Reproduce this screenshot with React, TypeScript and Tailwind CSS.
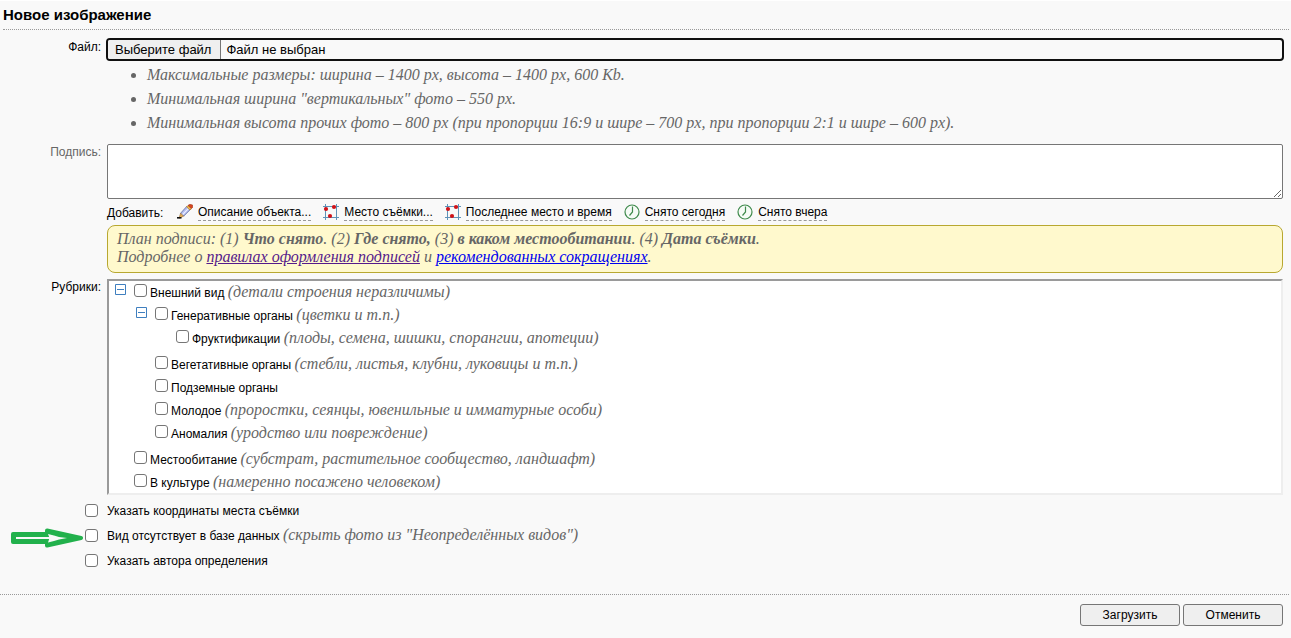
import React from "react";

const sans = "font-['Liberation_Sans',sans-serif]";

function Hint({ children }: { children: React.ReactNode }) {
  return (
    <span className="font-['Liberation_Serif',serif] text-base italic leading-none text-[#666]">{children}</span>
  );
}

function Tick({ id }: { id: string }) {
  return (
    <input
      id={id}
      type="checkbox"
      className="size-[13px] shrink-0 appearance-none rounded-[3px] border border-[#767676] bg-white checked:bg-[#0075ff]"
    />
  );
}

function PencilIcon() {
  return (
    <svg width="16" height="16" viewBox="0 0 16 16" aria-hidden="true">
      <path d="M3.6 9.2 10 2.2 13.4 5.4 6.6 12.2Z" fill="#b4bdf0" stroke="#5c6a9c" strokeWidth="0.8" />
      <path d="M5.6 10.6 11.8 4.2" stroke="#eef0ff" strokeWidth="1.2" />
      <path d="M9.6 2.8 11 1.4 14.4 4.6 13 6Z" fill="#f2c04a" stroke="#a8611c" strokeWidth="0.6" />
      <path d="M11 1.4 12.8.3 15.6 1 15.6 3.2 14.4 4.6Z" fill="#d8441f" stroke="#a03a1a" strokeWidth="0.6" />
      <path d="M3.6 9.2 6.6 12.2 2 14.2Z" fill="#e8b25a" stroke="#8a5a20" strokeWidth="0.5" />
      <path d="M0 13.8H4.5" stroke="#111" strokeWidth="1.6" />
    </svg>
  );
}

function MapIcon() {
  return (
    <svg width="16" height="16" viewBox="0 0 16 16" aria-hidden="true">
      <path d="M2.5 0V16M13.5 0V16M0 2.5H16M0 13.5H16" stroke="#5f93b8" strokeWidth="1" fill="none" />
      <circle cx="3" cy="5" r="2.1" fill="#d01218" />
      <circle cx="11" cy="3" r="2.1" fill="#d01218" />
      <circle cx="7" cy="12" r="2.1" fill="#d01218" />
    </svg>
  );
}

function ClockIcon() {
  return (
    <svg width="16" height="16" viewBox="0 0 16 16" aria-hidden="true">
      <circle cx="8" cy="8" r="7" fill="#f6fbf6" stroke="#3f8a4c" strokeWidth="1.2" />
      <path d="M8.5 2.5V8L5.5 11.5" stroke="#3f8a4c" strokeWidth="1.2" fill="none" />
    </svg>
  );
}

const actions = [
  { text: "Описание объекта...", icon: <PencilIcon /> },
  { text: "Место съёмки...", icon: <MapIcon /> },
  { text: "Последнее место и время", icon: <MapIcon /> },
  { text: "Снято сегодня", icon: <ClockIcon /> },
  { text: "Снято вчера", icon: <ClockIcon /> },
];

type Node = { id: string; text: string; hint?: string; children?: Node[] };

const tree: Node[] = [
  {
    id: "view",
    text: "Внешний вид",
    hint: "(детали строения неразличимы)",
    children: [
      {
        id: "gen",
        text: "Генеративные органы",
        hint: "(цветки и т.п.)",
        children: [
          { id: "fruit", text: "Фруктификации", hint: "(плоды, семена, шишки, спорангии, апотеции)" },
        ],
      },
      { id: "veg", text: "Вегетативные органы", hint: "(стебли, листья, клубни, луковицы и т.п.)" },
      { id: "under", text: "Подземные органы" },
      { id: "young", text: "Молодое", hint: "(проростки, сеянцы, ювенильные и имматурные особи)" },
      { id: "anomaly", text: "Аномалия", hint: "(уродство или повреждение)" },
    ],
  },
  { id: "habitat", text: "Местообитание", hint: "(субстрат, растительное сообщество, ландшафт)" },
  { id: "culture", text: "В культуре", hint: "(намеренно посажено человеком)" },
];

function Branch({ nodes }: { nodes: Node[] }) {
  return (
    <ul className="flex flex-col gap-1">
      {nodes.map((n) => (
        <li key={n.id}>
          <div className="flex h-[19px] items-start">
            <span className="w-[19px] shrink-0">
              {n.children && (
                <button type="button" aria-label="Свернуть" className="block">
                  <svg width="11" height="11" viewBox="0 0 11 11">
                    <path d="M.5.5H10.5V10.5H.5ZM2 5.5H9" fill="#fff" stroke="#3f7fbf" />
                  </svg>
                </button>
              )}
            </span>
            <Tick id={n.id} />
            <label htmlFor={n.id} className="ml-[3px] whitespace-nowrap leading-[18px]">
              {n.text} {n.hint && <Hint>{n.hint}</Hint>}
            </label>
          </div>
          {n.children && (
            <div className="pb-[3px] pl-[21px] pt-1">
              <Branch nodes={n.children} />
            </div>
          )}
        </li>
      ))}
    </ul>
  );
}

const options = [
  { id: "coords", text: "Указать координаты места съёмки" },
  { id: "missing", text: "Вид отсутствует в базе данных", hint: '(скрыть фото из "Неопределённых видов")', arrow: true },
  { id: "author", text: "Указать автора определения" },
];

const button =
  "h-[22px] w-[100px] rounded-[3px] border border-[#767676] bg-[#efefef] text-center text-xs leading-5";

export default function App() {
  return (
    <form className={`min-h-screen border-t border-white bg-[#f9f9f9] text-xs text-black ${sans}`}>
      <h1 className="ml-[3px] mr-0.5 h-[29px] border-b border-dotted border-[#999] text-[15px] font-bold leading-7">
        Новое изображение
      </h1>

      <div className="grid grid-cols-[101px_minmax(0,1fr)] gap-x-[6px] pr-2 pt-2">
        <label htmlFor="file" className="text-right leading-[18px]">
          Файл:
        </label>
        <div>
          <div className="relative -mx-px flex h-[23px] items-stretch overflow-hidden rounded border-2 border-[#101010] text-[13px] leading-[19px]">
            <span className="border-r border-[#767676] bg-[#efefef] pl-[7px] pr-[9px]">Выберите файл</span>
            <span className="pl-[5px]">Файл не выбран</span>
            <input id="file" type="file" className="absolute inset-0 opacity-0" />
          </div>
          <ul className="mt-0.5 list-disc pl-10 font-['Liberation_Serif',serif] text-base italic leading-6 text-[#666]">
            <li>Максимальные размеры: ширина – 1400 px, высота – 1400 px, 600 Kb.</li>
            <li>Минимальная ширина "вертикальных" фото – 550 px.</li>
            <li>
              Минимальная высота прочих фото – 800 px (при пропорции 16:9 и шире – 700 px, при пропорции 2:1 и шире –
              600 px).
            </li>
          </ul>
        </div>

        <label htmlFor="caption" className="mt-2 text-right leading-[18px] text-[#666]">
          Подпись:
        </label>
        <div className="mt-[9px]">
          <textarea id="caption" className="block h-[55px] w-full rounded-[2px] border border-[#767676] bg-white" />
          <div className="flex h-[26px] items-center leading-4">
            <span className="w-[70px] pt-px">Добавить:</span>
            <div className="flex gap-3">
              {actions.map((a) => (
                <button key={a.text} type="button" className="flex items-center gap-[5px] whitespace-nowrap">
                  {a.icon}
                  <span className="border-b border-dashed border-[#999] pt-px leading-[15px]">{a.text}</span>
                </button>
              ))}
            </div>
          </div>
          <div className="h-12 rounded-lg border border-[#b8a830] bg-[#fff9cd] px-[9px] pt-1 font-['Liberation_Serif',serif] text-base italic leading-[18px] text-[#666]">
            <p>
              План подписи: (1) <b>Что снято</b>. (2) <b>Где снято,</b> (3) <b>в каком местообитании</b>. (4){" "}
              <b>Дата съёмки</b>.
            </p>
            <p>
              Подробнее о{" "}
              <a href="#rules" className="text-[#551a8b] underline">
                правилах оформления подписей
              </a>{" "}
              и{" "}
              <a href="#abbr" className="text-[#0000ee] underline">
                рекомендованных сокращениях
              </a>
              .
            </p>
          </div>
        </div>

        <span className="mt-[5px] text-right leading-[18px]">Рубрики:</span>
        <div className="mt-1.5 border-2 border-b-[#eee] border-l-[#9a9a9a] border-r-[#eee] border-t-[#9a9a9a] bg-white pl-[6px] pt-[3px]">
          <Branch nodes={tree} />
        </div>
      </div>

      <ul className="mt-[3px]">
        {options.map((o) => (
          <li key={o.id} className="relative flex h-[25px] items-center gap-[9px] pl-[85px]">
            {o.arrow && (
              <svg className="absolute left-[11px] top-[5px]" width="72" height="20" viewBox="0 0 72 20" aria-hidden="true">
                <path
                  d="M2 6H36V2.5L70 10 36 17.5V14H2Z"
                  fill="#22b14c"
                  stroke="#22b14c"
                  strokeWidth="4"
                  strokeLinejoin="round"
                />
                <path d="M5 10H40" stroke="#f9f9f9" strokeWidth="2" />
                <path d="M37 6 43 7.500 48 9 56 10 48 11.500 43 13 37 14.500 38.500 10Z" fill="#f9f9f9" />
              </svg>
            )}
            <Tick id={o.id} />
            <label htmlFor={o.id} className="whitespace-nowrap">
              {o.text} {o.hint && <Hint>{o.hint}</Hint>}
            </label>
          </li>
        ))}
      </ul>

      <div className="mr-0.5 mt-[21px] flex justify-end gap-[3px] border-t border-dotted border-[#999] pr-[6px] pt-[9px]">
        <button type="submit" className={button}>
          Загрузить
        </button>
        <button type="button" className={button}>
          Отменить
        </button>
      </div>
    </form>
  );
}
